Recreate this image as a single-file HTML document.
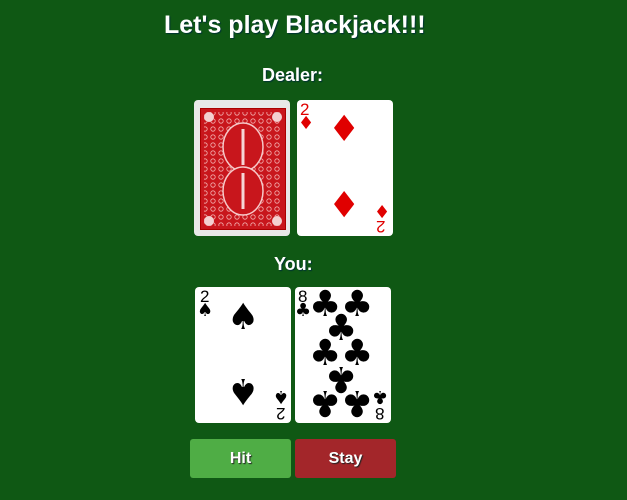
<!DOCTYPE html>
<html><head><style>
body{margin:0;width:627px;height:500px;background:#0f5814;font-family:"Liberation Sans",Arial,sans-serif;position:relative;overflow:hidden}
.t{position:absolute;color:#fff;font-weight:bold;text-shadow:1px 1px 1px #033;white-space:nowrap}
.card{position:absolute;width:96px;height:136px;background:#fff;border-radius:4px;overflow:hidden}
.s{position:absolute;line-height:1;font-family:"DejaVu Sans",sans-serif}
.r{color:#e00000}.k{color:#000}
.n{position:absolute;font-size:17px;line-height:1;font-family:"Liberation Sans",sans-serif}
.f{transform:rotate(180deg)}
.btn{position:absolute;top:439px;height:39px;width:101px;border-radius:3px;color:#fff;font-weight:bold;font-size:16px;text-align:center;line-height:40px;text-shadow:1px 1px 1px #222}
</style></head><body>
<div class="t" style="left:164px;top:11px;font-size:25px">Let's play Blackjack!!!</div>
<div class="t" style="left:262px;top:65px;font-size:18px">Dealer:</div>
<div class="t" style="left:274px;top:254px;font-size:18px">You:</div>

<div class="card" style="left:194px;top:100px;background:#e8e8e8">
<div style="position:absolute;left:6px;top:8px;width:84px;height:120px;background:#c8161c;border:1px solid #a00">
<svg width="84" height="120" style="position:absolute;left:0;top:0">
<defs><pattern id="p" width="8" height="8" patternUnits="userSpaceOnUse"><circle cx="4" cy="4" r="2.2" fill="none" stroke="#f3b0b0" stroke-width="0.8"/></pattern></defs>
<rect x="3" y="3" width="78" height="114" fill="url(#p)"/>
<ellipse cx="42" cy="38" rx="20" ry="24" fill="#c8161c" stroke="#f6c8c8" stroke-width="1.5"/>
<ellipse cx="42" cy="82" rx="20" ry="24" fill="#c8161c" stroke="#f6c8c8" stroke-width="1.5"/>
<path d="M42 20v36M42 64v36" stroke="#f6d6d6" stroke-width="3"/>
<circle cx="8" cy="8" r="5" fill="#f3d0d0"/><circle cx="76" cy="8" r="5" fill="#f3d0d0"/>
<circle cx="8" cy="112" r="5" fill="#f3d0d0"/><circle cx="76" cy="112" r="5" fill="#f3d0d0"/>
</svg></div></div>

<div class="card" style="left:297px;top:100px">
<div class="n r" style="left:3px;top:1px">2</div>
<div class="s r" style="left:1px;top:15px;font-size:18px">♦</div>
<div class="s r" style="left:31px;top:12px;font-size:36px">♦</div>
<div class="s r f" style="left:31px;top:84px;font-size:36px">♦</div>
<div class="s r f" style="left:77px;top:101px;font-size:18px">♦</div>
<div class="n r f" style="left:79px;top:118px">2</div>
</div>

<div class="card" style="left:195px;top:287px">
<div class="n k" style="left:5px;top:1px">2</div>
<div class="s k" style="left:2px;top:15px;font-size:18px">♠</div>
<div class="s k" style="left:32px;top:13px;font-size:36px">♠</div>
<div class="s k f" style="left:32px;top:85px;font-size:36px">♠</div>
<div class="s k f" style="left:78px;top:100px;font-size:18px">♠</div>
<div class="n k f" style="left:81px;top:118px">2</div>
</div>

<div class="card" style="left:295px;top:287px">
<div class="n k" style="left:3px;top:1px">8</div>
<div class="s k" style="left:0px;top:15px;font-size:18px">♣</div>
<div class="s k" style="left:14px;top:0px;font-size:36px">♣</div>
<div class="s k" style="left:46px;top:0px;font-size:36px">♣</div>
<div class="s k" style="left:30px;top:24px;font-size:36px">♣</div>
<div class="s k" style="left:14px;top:49px;font-size:36px">♣</div>
<div class="s k" style="left:46px;top:49px;font-size:36px">♣</div>
<div class="s k f" style="left:30px;top:73px;font-size:36px">♣</div>
<div class="s k f" style="left:14px;top:97px;font-size:36px">♣</div>
<div class="s k f" style="left:46px;top:97px;font-size:36px">♣</div>
<div class="s k f" style="left:77px;top:100px;font-size:18px">♣</div>
<div class="n k f" style="left:80px;top:118px">8</div>
</div>

<div class="btn" style="left:190px;background:#4fad45">Hit</div>
<div class="btn" style="left:295px;background:#a3262a">Stay</div>
</body></html>
